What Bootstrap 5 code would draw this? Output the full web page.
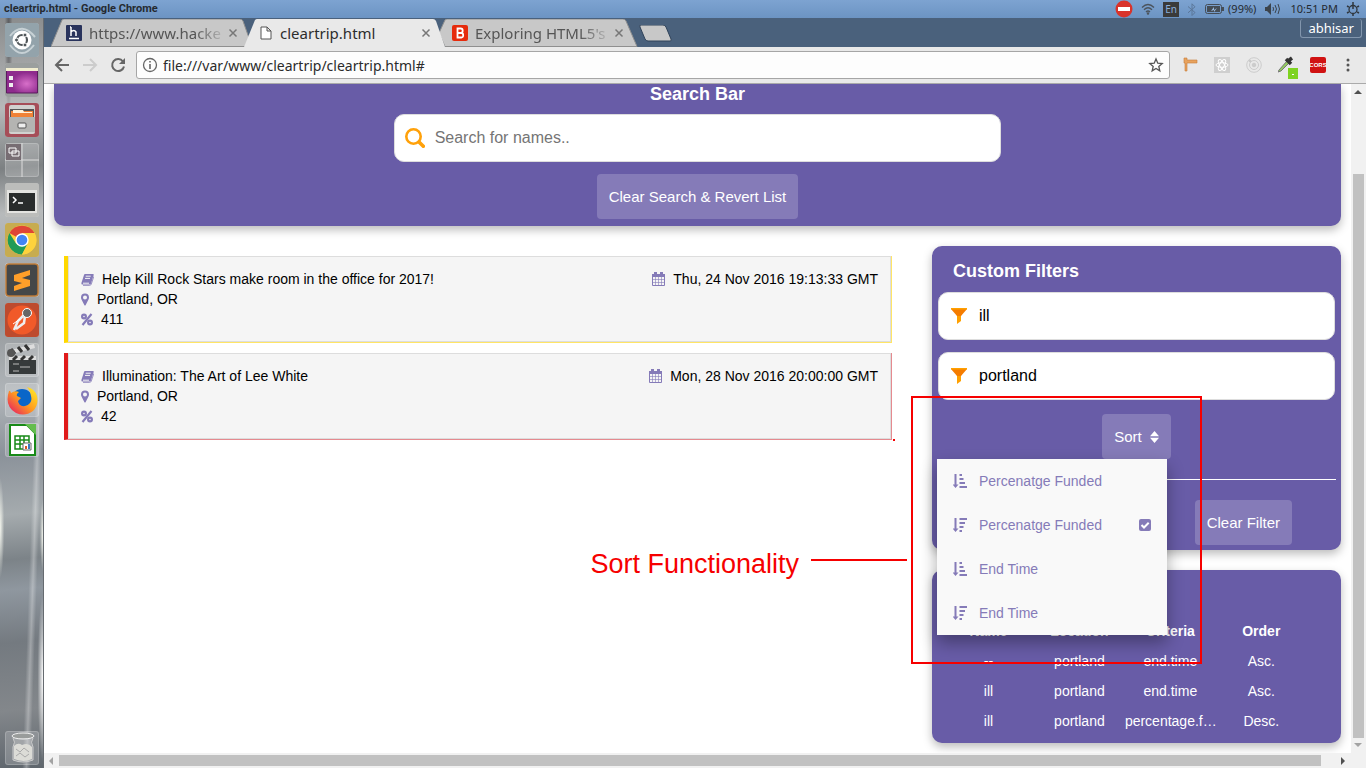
<!DOCTYPE html>
<html lang="en">
<head>
<meta charset="utf-8">
<meta name="viewport" content="width=device-width, initial-scale=1">
<title>cleartrip.html - Google Chrome</title>
<link rel="stylesheet" href="https://cdn.jsdelivr.net/npm/bootstrap@5.3.0/dist/css/bootstrap.min.css">
<style>
:root{--violet:#685ca7;--violet-soft:#857bb8}
body{font-family:"Liberation Sans",Arial,sans-serif;font-size:14px;line-height:20px;color:#000;background:#fff}
button{font-family:inherit}
svg{display:block;flex:none}
.bare{border:0;background:none;padding:0;color:inherit}
/* desktop bar */
.sysbar{height:18px;background:linear-gradient(#7da3d1,#6c94c3);font-family:"Noto Sans",sans-serif;font-size:11px;line-height:18px;color:#252a30;padding:0 6px 0 4px}
.sysbar .win{font-weight:700;font-size:11px;font-family:Roboto,sans-serif}
.lang{width:16px;height:15px;background:#3a3a3a;color:#8bb0dc;font-size:10px;line-height:15px;text-align:center}
/* launcher */
.dock{width:44px;flex:none;padding:5px 5px 3px;gap:6px;border-right:1px solid #666b70;
background:linear-gradient(92deg,#fff0 70%,#ffffff50 76%,#fff0 82%),radial-gradient(ellipse at 0 68%,#f4f6ee 0,#fff0 7%),radial-gradient(ellipse at 100% 69%,#f4f6ee 0,#fff0 5%),radial-gradient(ellipse at 100% 88%,#fff 0,#fff0 9%),radial-gradient(ellipse at 20% 2%,#30303590,#fff0 8%),linear-gradient(175deg,#8a8c8d 0,#b7b9ba 12%,#7c8082 20%,#b7babb 26%,#969a9d 40%,#b0b5b9 50%,#8b929a 58%,#a5abae 66%,#7c8388 72%,#8f979f 76%,#747a80 83%,#83878b 92%,#5f666d 100%)}
.tile{width:34px;height:34px;border-radius:3px;background:#ffffff30;box-shadow:inset 0 0 0 1px #ffffff30}
/* browser chrome */
.tabs{height:29px;background:#4a617c;padding:1px 4px 0 7px;font-family:"Noto Sans",sans-serif;font-size:15px}
.tab{position:relative;isolation:isolate;width:201px;height:28px;padding:0 14px 0 15px;color:#555;line-height:28px}
.tab+.tab{margin-left:-8px}
.tab.on{z-index:1;color:#2d2d2d}
.tab .shape{position:absolute;inset:0;width:100%;height:100%;z-index:-1}
.tab .cap{white-space:nowrap;margin-left:7px}
.tab:not(.on) .cap{-webkit-mask-image:linear-gradient(90deg,#000 80%,#0003);mask-image:linear-gradient(90deg,#000 80%,#0003)}
.user{border:1px solid #8296ad;border-top:0;border-radius:3px;color:#fff;font-size:13px;line-height:17px;padding:0 7px;height:19px}
.tools{height:37px;background:#e9e9e9;border-bottom:1px solid #aaa;padding:0 12px 0 10px;color:#666}
.omni{height:28px;background:#fdfdfd;border:1px solid #a6a6a6;border-radius:3px;padding:0 5px;margin-left:10px}
.omni input{border:0;background:none;outline:0;font:14px "Noto Sans",sans-serif;color:#2b2b2b;padding:0;margin-left:5px}
.picker{margin-right:-4px}
/* page */
.sheet{overflow:hidden;min-width:0;padding:0 10px;background:#fff}
.panel{background:var(--violet);border-radius:10px;color:#fff;box-shadow:0 4px 10px #0004}
.panel h2{font-size:18px;line-height:20px;font-weight:700;margin:0}
.hunt{border-top-left-radius:0;border-top-right-radius:0;padding-bottom:7px}
.hunt h2{margin-bottom:10px}
.field{height:48px;border:1px solid #ddd;border-radius:10px;background:#fff;padding:0 10px;gap:10px}
.field input{border:0;outline:0;font-size:16px;color:#000;background:none;padding:0;min-width:0}
.field input::placeholder{color:#757575;opacity:1}
.hunt .field{width:calc(48% - 10px);min-width:300px}
.act{height:45px;border:0;border-radius:4px;background:var(--violet-soft);color:#fff;font-size:15px;line-height:20px;padding:0 12px}
.act:hover{background:#7a70ad}
.deals{padding:30px 20px 0 10px}
.deal{border:1px solid var(--edge);border-left:4px solid var(--bar);border-top:0;box-shadow:inset 0 0 0 1px #ddd;background:#f5f5f5;padding:13px 13px 13px;color:#000}
.deal+.deal{margin-top:10px}
.deal.gold{--bar:#ffd800;--edge:#ffe566}
.deal.red{--bar:#e01b1b;--edge:#e58a8f}
.deal svg{fill:var(--violet-soft);color:var(--violet-soft)}
.side{padding:20px 0 0 20px}
.side .panel+.panel{margin-top:20px}
.filters{padding:15px 6px 5px}
.filters h2{padding:0 15px;margin-bottom:11px}
.filters .field{margin-bottom:12px;padding:0 12px;gap:12px}
.sortline{padding-top:2px}
.rule{height:1px;background:#fff;margin:20px -1px}
.clearline{padding-right:43px}
.sorts{position:absolute;left:5px;top:213px;width:230px;background:#f9f9f9;box-shadow:0 8px 16px #0005;z-index:2;color:var(--violet-soft)}
.sorts a{height:44px;padding:0 16px;color:var(--violet-soft);text-decoration:none}
.sorts a:hover{background:#eee}
.recent{padding:46px 11px 7px}
.recent table{width:94%;table-layout:fixed;text-align:center}
.recent th,.recent td{height:30px;padding:0;white-space:nowrap}
/* red review marks */
.frame{position:absolute;left:-21px;top:150px;width:291px;height:268px;border:2px solid #f60000;z-index:3;pointer-events:none}
.tag{position:absolute;right:100%;top:148px;padding-right:6px;gap:12px;color:#f60000;font-size:27px;line-height:36px;white-space:nowrap}
.tag i{width:96px;height:2px;background:#f60000;margin-bottom:8px}
.speck{position:absolute;left:100%;bottom:-2px;width:2px;height:2px;background:#f60000;margin-left:2px}
/* scrollbars */
.vbar{width:15px;flex:none;background:#f1f1f1;padding:0 2px}
.vbar span{flex:75 0 0}
.vbar i{width:11px;background:#c1c1c1;flex:564 0 0}
.hbar{height:15px;flex:none;background:#f1f1f1}
.hbar i{height:11px;background:#c1c1c1;flex:1}
</style>
</head>
<body class="vh-100 d-flex flex-column overflow-hidden">
<svg width="0" height="0" class="position-absolute" aria-hidden="true"><defs>
<symbol id="book" viewBox="0 0 13 13"><path d="M4 1h8q1 0 .7 1L10 10.500q-.3 1-1.300 1H1.500Q0 11.500.4 10L3 2q.3-1 1-1z"/><path d="M4.700 3.200h5M4 5.400h5M2 10.200h6" stroke="#f5f5f5" fill="none"/><path d="M12.800 3.500 10.300 11q-.4 1.400-1.700 1.400H2" fill="none" stroke="currentColor" stroke-width=".8"/></symbol>
<symbol id="pin" viewBox="0 0 8 13"><path fill-rule="evenodd" d="M4 .5a4 4 0 0 1 4 4q0 1-.5 2L4.700 12q-.7 1-1.400 0L.5 6.500Q0 5.500 0 4.500a4 4 0 0 1 4-4zm0 2a2 2 0 1 0 0 4 2 2 0 0 0 0-4z"/></symbol>
<symbol id="pct" viewBox="0 0 12 13"><g fill="none" stroke="currentColor" stroke-width="2.200"><circle cx="3" cy="3.500" r="1.900"/><circle cx="9" cy="9.500" r="1.900"/><path d="M10.500 1 1.500 12"/></g></symbol>
<symbol id="cal" viewBox="0 0 13 14"><path fill="none" stroke="currentColor" d="M.5 2.500h12v11H.5z"/><path d="M0 2h13v3H0zM2 0h3v3H2zM8 0h3v3H8z"/><path d="M3.500 5v9M6.500 5v9M9.500 5v9M0 7.500h13M0 10.500h13" stroke="currentColor" stroke-width=".6"/></symbol>
<symbol id="asc" viewBox="0 0 14 14"><path d="M1.500 0h2v10.500H5.500L2.500 14-.5 10.500h2zM6.500 0h2.500v2H6.500zM6.500 4h4v2h-4zM6.500 8h5.500v2H6.500zM6.500 12H14v2H6.500z"/></symbol>
<symbol id="desc" viewBox="0 0 14 14"><path d="M1.500 0h2v10.500H5.500L2.500 14-.5 10.500h2zM6.500 0H14v2H6.500zM6.500 4H12v2H6.500zM6.500 8h4v2h-4zM6.500 12H9v2H6.500z"/></symbol>
<symbol id="funnel" viewBox="0 0 16 16"><path fill="#ffa000" d="M6 7h4v6l-4 3z"/><path fill="#f57c00" d="M0 1h16l-6 7H6z"/><path fill="#ffa000" d="M0 0h16v1.500H0z"/></symbol>
<symbol id="cross" viewBox="0 0 10 10"><path d="m1.500 1.500 7 7M8.500 1.500l-7 7" stroke="#777" stroke-width="1.500" fill="none"/></symbol>
</defs></svg>

<header class="sysbar d-flex align-items-center flex-shrink-0">
  <span class="win me-auto">cleartrip.html - Google Chrome</span>
  <svg width="18" height="18" viewBox="0 0 18 18"><circle cx="9" cy="9" r="8.500" fill="#d9332b"/><path fill="#fff" d="M3 7h12v4H3z"/></svg>
  <svg class="ms-2" width="14" height="12" viewBox="0 0 14 12" fill="none" stroke="#4b535c" stroke-width="1.300"><path d="M1 4.500q6-6 12 0M3 6.800q4-4 8 0M5 9q2-2 4 0"/><circle cx="7" cy="10.500" r=".6"/></svg>
  <span class="lang ms-2 me-2">En</span>
  <svg width="10" height="13" viewBox="0 0 10 13" fill="none" stroke="#5b7698"><path d="m1 3.500 7 6-3 3V.8l3 3-7 6"/></svg>
  <svg class="ms-2" width="19" height="10" viewBox="0 0 19 10"><rect x=".5" y=".5" width="16" height="9" rx="2" fill="none" stroke="#454d56"/><path d="M2 2h13v6H2zM17 3h2v4h-2z" fill="#454d56"/><path d="m6 7 3-4v3l3-2-3 4V6z" fill="#9bbbe0"/></svg>
  <span class="ms-1">(99%)</span>
  <svg class="ms-2 me-2" width="18" height="12" viewBox="0 0 18 12"><path fill="#3c444c" d="M1 4h2l4-4v12L3 8H1z"/><path fill="none" stroke="#3c444c" d="M9 4q1 2 0 4M11 2q3 4 0 8M14 1q3 5 0 10"/></svg>
  <span>10:51 PM</span>
  <svg class="ms-2" width="14" height="14" viewBox="0 0 14 14" fill="none" stroke="#30373e"><circle cx="7" cy="7.500" r="4" stroke-width="1.300"/><path d="M7 0v7M1 4l1.800 1M13 4l-1.800 1M1 11l1.800-1M13 11l-1.800-1M7 11.500V14" stroke-width="1.500"/></svg>
</header>

<div class="d-flex flex-grow-1" style="min-height:0">
  <nav class="dock d-flex flex-column" aria-label="Launcher">
    <svg class="tile" viewBox="0 0 34 34"><path fill="#93a3ab" d="M0 0h34v34H0z"/><path d="M5 13Q17-2 30 14M29 22Q17 38 5 22" stroke="#c7d1d5" stroke-width="2" fill="none"/><circle cx="17" cy="17" r="9.500" fill="#fff"/><circle cx="17" cy="17" r="5" fill="none" stroke="#505659" stroke-width="2.200"/><g fill="#505659" stroke="#fff"><circle cx="11.500" cy="17" r="2"/><circle cx="20" cy="12" r="2"/><circle cx="20" cy="22" r="2"/></g></svg>
    <svg class="tile" viewBox="0 0 34 34"><path fill="#9b9f9e" d="M0 0h34v34H0z"/><defs><radialGradient id="pu" cx=".65" cy=".6"><stop stop-color="#d86fc9"/><stop offset="1" stop-color="#8e2b8d"/></radialGradient></defs><path fill="url(#pu)" stroke="#5b1d5d" d="M1.500 7h31v23h-31z"/><path fill="#f1edcf" d="M1 5h32v3H1z"/><path fill="#eee" d="M4 13h4v4H4zM4 20h4v4H4z"/></svg>
    <svg class="tile" viewBox="0 0 34 34"><path fill="#a64d58" d="M0 0h34v34H0z"/><rect x="4" y="2" width="26" height="29" rx="2" fill="#d1d1cf"/><path fill="#555" d="M5 6h24v9H5z"/><path fill="#f08236" d="M6 8h22v6H6z"/><path fill="#fff3db" d="M8 7h10l1 2h8v1H8z"/><path fill="#b4b4b2" d="M4 14h26v15H4z"/><rect x="13" y="20" width="8" height="5" rx="1" fill="#eee" stroke="#555"/></svg>
    <svg class="tile" viewBox="0 0 34 34"><path stroke="#ddd" d="M17 0v34M0 17h34"/><path fill="#776d73" d="M1 1h15v16H1z"/><path fill="#776d73" stroke="#fff" d="M4 5h7v5H4zM7 8h7v5H7z"/></svg>
    <svg class="tile" viewBox="0 0 34 34"><path fill="#bcbdbb" d="M0 0h34v34H0z"/><path fill="#e3e3e0" d="M2 7h30v23H2z"/><path fill="#292c2c" d="M4 10h26v18H4z"/><path d="m8 14 3 3-3 3M13 20h5" stroke="#fff" stroke-width="1.500" fill="none"/></svg>
    <svg class="tile" viewBox="0 0 34 34"><path fill="#c7ac50" d="M0 0h34v34H0z"/><circle cx="17" cy="17" r="14.500" fill="#fdd23d"/><path fill="#df4536" d="M17 17 4.400 10A14.500 14.500 0 0 1 29.600 10H17z"/><path fill="#209b58" d="M4.400 10A14.500 14.500 0 0 0 17 31.500L23 21 11 20.500z"/><path fill="#fdd23d" d="M22.500 20.500 17 31.500A14.500 14.500 0 0 0 29.600 10H17z"/><circle cx="17" cy="17" r="6.700" fill="#fff"/><circle cx="17" cy="17" r="5.300" fill="#4285f4"/></svg>
    <svg class="tile" viewBox="0 0 34 34"><rect x="1" y="1" width="32" height="32" rx="3" fill="#444748" stroke="#bb7936" stroke-width="1.500"/><path fill="#ff9f29" d="m9 12 16-5v5l-8 3 8 2v6L9 28v-5l8-3-8-2z"/></svg>
    <svg class="tile" viewBox="0 0 34 34"><path fill="#bd4b2e" d="M0 0h34v34H0z"/><circle cx="17" cy="17" r="14.500" fill="#f15a29"/><path d="m20 11-7 7-4 9M20 13l-1 7-8 6" stroke="#eee" stroke-width="2.500" fill="none"/><circle cx="22" cy="10" r="4.500" fill="#666" stroke="#fff"/><path d="m8 21 7-5" stroke="#fff"/></svg>
    <svg class="tile" viewBox="0 0 34 34"><path fill="#363a3b" d="M4 14h27v17H4z"/><path fill="#ddd" d="m2 8 27-7 1 4L3 12zM4 13h27v4H4z"/><path stroke="#333" stroke-width="3" d="m6 6 4 5M13 4l4 5M20 2l4 5M8 17l4-4M16 17l4-4M24 17l4-4"/><path stroke="#bbb" d="M8 21h6M15 24h10M8 28h6"/><circle cx="6" cy="10" r="4" fill="#555"/></svg>
    <svg class="tile" viewBox="0 0 34 34"><defs><linearGradient id="fx" x1="1" x2="0" y2="1"><stop offset=".1" stop-color="#ffe226"/><stop offset=".5" stop-color="#ff9a1f"/><stop offset=".9" stop-color="#e8265f"/></linearGradient></defs><circle cx="17" cy="17" r="11" fill="#0a66c8"/><path fill="url(#fx)" d="M4 8q1-1 2 2 4-3 8-1-3 2-2 4l4 2-3 3q1 6 7 5 8-2 6-10-1-6-4-9 8 2 10 9 2 9-4 15-8 6-17 2Q-1 23 4 8z"/></svg>
    <svg class="tile" viewBox="0 0 34 34"><path fill="#fff" stroke="#188a18" stroke-width="2" d="M5 2h17l8 8v22H5z"/><path fill="#64bd4e" d="M20 1h11v11z"/><path fill="none" stroke="#188a18" stroke-width="1.500" d="M10 13h14v13H10zM10 17h14M10 21h14M15 13v13M19 13v13"/><path fill="#fff" stroke="#666" d="M18 20h8v7h-8z"/><path stroke="#dd5522" stroke-width="2" d="M21 26v-3"/><path stroke="#3a78c0" stroke-width="2" d="M24 26v-5"/></svg>
    <svg class="tile mt-auto" viewBox="0 0 34 34"><ellipse cx="18" cy="5" rx="11" ry="3" fill="#999c9b" stroke="#eee"/><path d="M8 7q3 4 0 9v13q10 4 20 0V16q-3-5 0-9" fill="#fff3" stroke="#ccc"/><path d="M9 15q4-4 8-1 6-3 10 2v12q-8 4-18 0z" fill="#dcdcd7"/><path d="m11 18 4 3 4-4 5 4M11 25l4-3 5 4 4-3" stroke="#aaa" fill="none"/></svg>
  </nav>

  <div class="d-flex flex-column flex-grow-1" style="min-width:0">
    <div class="tabs d-flex flex-shrink-0">
      <div class="tab d-flex align-items-center"><svg class="shape" viewBox="0 0 201 28" preserveAspectRatio="none"><path d="M0 27.500 11 1q1-1 2-1h176q2 0 3 2l9 25.500z" fill="#c8c8c8" stroke="#8f8f8f"/></svg>
        <svg width="16" height="16" viewBox="0 0 16 16"><rect width="16" height="16" rx="1" fill="#29335c"/><path d="M5 2v9M5 7q3-3 5 0v4M3 13.500h10M4 2h1" stroke="#fff" stroke-width="1.500" fill="none"/></svg>
        <span class="cap">https://www.hacke</span><button class="bare ms-auto" aria-label="Close tab"><svg width="10" height="10"><use href="#cross"/></svg></button></div>
      <div class="tab on d-flex align-items-center"><svg class="shape" viewBox="0 0 201 28" preserveAspectRatio="none"><path d="M0 28 11 1q1-1 2-1h176q2 0 3 2l9 26z" fill="#e9e9e9"/></svg>
        <svg width="14" height="16" viewBox="0 0 14 16"><path d="M2 2h6l4 4v8H2zM8 2v4h4" fill="#fff" stroke="#555"/></svg>
        <span class="cap">cleartrip.html</span><button class="bare ms-auto" aria-label="Close tab"><svg width="10" height="10"><use href="#cross"/></svg></button></div>
      <div class="tab d-flex align-items-center"><svg class="shape" viewBox="0 0 201 28" preserveAspectRatio="none"><path d="M8 27.500 2 14 8 1q1-1 2-1h176q2 0 3 2l11 25.500z" fill="#c8c8c8" stroke="#8f8f8f"/></svg>
        <svg width="16" height="16" viewBox="0 0 16 16"><rect width="16" height="16" rx="2" fill="#e62b0c"/><path d="M5.500 3.500h3.200q2 0 2 2.200t-2 2.300H5.500zM5.500 8h3.700q2 0 2 2.300t-2 2.200H5.500z" fill="none" stroke="#fff" stroke-width="1.800"/></svg>
        <span class="cap">Exploring HTML5's</span><button class="bare ms-auto" aria-label="Close tab"><svg width="10" height="10"><use href="#cross"/></svg></button></div>
      <button class="bare align-self-center" aria-label="New tab"><svg width="34" height="17" viewBox="0 0 34 17"><path d="M2 2q-1-2 1-2h22q2 0 3 2l5 12q1 2-1 2H10q-2 0-3-2z" fill="#c8c8c8" stroke="#2f4259"/></svg></button>
      <button class="bare user ms-auto">abhisar</button>
    </div>
    <div class="tools d-flex align-items-center flex-shrink-0">
      <button class="bare" aria-label="Back"><svg width="16" height="14" viewBox="0 0 16 14" fill="none" stroke="#666" stroke-width="2"><path d="M8 1 2 7l6 6M2 7h13"/></svg></button>
      <button class="bare mx-2 px-1" aria-label="Forward"><svg width="16" height="14" viewBox="0 0 16 14" fill="none" stroke="#ccc" stroke-width="2"><path d="m8 1 6 6-6 6M14 7H1"/></svg></button>
      <button class="bare" aria-label="Reload"><svg width="16" height="16" viewBox="0 0 16 16"><path d="M13 4.500A6 6 0 1 0 14 9.500" fill="none" stroke="#666" stroke-width="2"/><path d="M15 1v6H9z" fill="#666"/></svg></button>
      <div class="omni d-flex align-items-center flex-grow-1">
        <svg width="16" height="16" viewBox="0 0 16 16"><circle cx="8" cy="8" r="6.500" fill="none" stroke="#666" stroke-width="1.300"/><path d="M7.200 4h1.600v1.600H7.200zM7.200 7h1.600v5H7.200z" fill="#666"/></svg>
        <input class="flex-grow-1" type="text" aria-label="Address" value="file:///var/www/cleartrip/cleartrip.html#">
        <button class="bare" aria-label="Bookmark"><svg width="16" height="16" viewBox="0 0 16 16"><path d="m8 2 1.800 4.200 4.400.4-3.400 2.900 1 4.400L8 11.500l-3.800 2.400 1-4.400-3.400-2.900 4.400-.4z" fill="none" stroke="#555" stroke-width="1.300"/></svg></button>
      </div>
      <div class="d-flex gap-3 ms-2 ps-1 align-items-center">
        <svg width="16" height="16" viewBox="0 0 16 16"><path fill="#e8a35e" stroke="#c77e3a" stroke-width=".6" d="M2 1h3v2h10v3H5v8H3V6H2z"/></svg>
        <svg width="16" height="16" viewBox="0 0 16 16"><path fill="#cfcfcf" d="M0 0h16v16H0z"/><g fill="none" stroke="#fff"><ellipse cx="8" cy="8" rx="6" ry="2.300"/><ellipse cx="8" cy="8" rx="6" ry="2.300" transform="rotate(60 8 8)"/><ellipse cx="8" cy="8" rx="6" ry="2.300" transform="rotate(120 8 8)"/></g></svg>
        <svg width="16" height="16" viewBox="0 0 16 16" fill="none" stroke="#ccc"><circle cx="8" cy="8" r="7.300"/><circle cx="8" cy="8" r="4.500"/><circle cx="8" cy="8" r="1.800" fill="#ccc"/><circle cx="4" cy="4" r="1" fill="#bbb"/></svg>
        <svg class="picker" width="20" height="28" viewBox="0 0 20 28"><path d="m1 19 8-9 2 2-8 8-3 1z" fill="#92cb5e" stroke="#777"/><path d="m8 8 5 5M10 10l4-3" stroke="#333" stroke-width="3.500"/><path fill="#7ed321" d="M10 17h10v11H10z"/><path fill="#fff" d="M14 23h2v1h-2z"/></svg>
        <svg width="16" height="16" viewBox="0 0 16 16"><rect width="16" height="16" rx="2" fill="#d01212"/><text x="8" y="10" font-size="6" font-weight="700" fill="#fff" text-anchor="middle">CORS</text></svg>
        <button class="bare" aria-label="Menu"><svg width="12" height="14" viewBox="0 0 12 14" fill="#555"><circle cx="6" cy="2" r="1.500"/><circle cx="6" cy="7" r="1.500"/><circle cx="6" cy="12" r="1.500"/></svg></button>
      </div>
    </div>

    <div class="d-flex flex-grow-1" style="min-height:0">
      <main class="sheet flex-grow-1">
        <section class="panel hunt d-flex flex-column align-items-center">
          <h2>Search Bar</h2>
          <label class="field d-flex align-items-center mb-2">
            <svg width="20" height="20" viewBox="0 0 20 20" fill="none" stroke="#ffa10a"><circle cx="8.500" cy="8.500" r="7.200" stroke-width="2.600"/><path d="m14 14 4.300 4.300" stroke-width="3.600" stroke-linecap="round"/></svg>
            <input class="flex-grow-1" type="text" placeholder="Search for names.." aria-label="Search for names">
          </label>
          <button class="act mt-1">Clear Search &amp; Revert List</button>
        </section>

        <div class="row g-0">
          <div class="col-8 deals">
            <article class="deal gold d-flex justify-content-between">
              <div>
                <div class="d-flex align-items-center gap-2"><svg width="13" height="13"><use href="#book"/></svg>Help Kill Rock Stars make room in the office for 2017!</div>
                <div class="d-flex align-items-center gap-2"><svg width="8" height="13"><use href="#pin"/></svg>Portland, OR</div>
                <div class="d-flex align-items-center gap-2"><svg width="12" height="13"><use href="#pct"/></svg>411</div>
              </div>
              <div class="d-flex align-items-center gap-2 align-self-start"><svg width="13" height="14"><use href="#cal"/></svg>Thu, 24 Nov 2016 19:13:33 GMT</div>
            </article>
            <article class="deal red d-flex justify-content-between position-relative">
              <div>
                <div class="d-flex align-items-center gap-2"><svg width="13" height="13"><use href="#book"/></svg>Illumination: The Art of Lee White</div>
                <div class="d-flex align-items-center gap-2"><svg width="8" height="13"><use href="#pin"/></svg>Portland, OR</div>
                <div class="d-flex align-items-center gap-2"><svg width="12" height="13"><use href="#pct"/></svg>42</div>
              </div>
              <div class="d-flex align-items-center gap-2 align-self-start"><svg width="13" height="14"><use href="#cal"/></svg>Mon, 28 Nov 2016 20:00:00 GMT</div>
              <span class="speck"></span>
            </article>
          </div>

          <div class="col-4 side">
            <section class="panel position-relative filters">
              <h2>Custom Filters</h2>
              <label class="field d-flex align-items-center"><svg width="16" height="16"><use href="#funnel"/></svg><input class="flex-grow-1" type="text" value="ill" aria-label="Filter by name"></label>
              <label class="field d-flex align-items-center"><svg width="16" height="16"><use href="#funnel"/></svg><input class="flex-grow-1" type="text" value="portland" aria-label="Filter by location"></label>
              <div class="sortline text-center"><button class="act d-inline-flex align-items-center gap-2">Sort <svg width="9" height="14" viewBox="0 0 9 14" fill="#fff"><path d="M4.500 1 9 6.300H0zM4.500 13 9 7.700H0z"/></svg></button></div>
              <div class="rule"></div>
              <div class="clearline d-flex justify-content-end"><button class="act">Clear Filter</button></div>
              <div class="sorts">
                <a href="#" class="d-flex align-items-center"><svg class="me-2" width="14" height="14" fill="currentColor"><use href="#asc"/></svg><span class="ms-1">Percenatge Funded</span></a>
                <a href="#" class="d-flex align-items-center"><svg class="me-2" width="14" height="14" fill="currentColor"><use href="#desc"/></svg><span class="ms-1 me-auto">Percenatge Funded</span><svg width="12" height="12" viewBox="0 0 12 12"><rect width="12" height="12" rx="2" fill="#857bb8"/><path d="m2.500 6 2.500 2.500L9.700 3.800" stroke="#fff" stroke-width="2" fill="none"/></svg></a>
                <a href="#" class="d-flex align-items-center"><svg class="me-2" width="14" height="14" fill="currentColor"><use href="#asc"/></svg><span class="ms-1">End Time</span></a>
                <a href="#" class="d-flex align-items-center"><svg class="me-2" width="14" height="14" fill="currentColor"><use href="#desc"/></svg><span class="ms-1">End Time</span></a>
              </div>
              <div class="frame"><div class="tag d-flex align-items-center">Sort Functionality<i></i></div></div>
            </section>
            <section class="panel recent">
              <table>
                <thead><tr><th>Name</th><th>Location</th><th>Criteria</th><th>Order</th></tr></thead>
                <tbody>
                  <tr><td>--</td><td>portland</td><td>end.time</td><td>Asc.</td></tr>
                  <tr><td>ill</td><td>portland</td><td>end.time</td><td>Asc.</td></tr>
                  <tr><td>ill</td><td>portland</td><td>percentage.f…</td><td>Desc.</td></tr>
                </tbody>
              </table>
            </section>
          </div>
        </div>
      </main>
      <div class="vbar d-flex flex-column align-items-center">
        <svg width="9" height="15" viewBox="0 0 9 15"><path d="M0 10h8L4 6z" fill="#505050"/></svg>
        <span></span><i></i>
        <svg width="9" height="15" viewBox="0 0 9 15"><path d="M0 5h8L4 9z" fill="#a3a3a3"/></svg>
      </div>
    </div>
    <div class="hbar d-flex align-items-center">
      <svg width="15" height="15" viewBox="0 0 15 15"><path d="M9 4v8L5 8z" fill="#a3a3a3"/></svg><i></i>
      <svg class="ms-2 me-3" width="21" height="15" viewBox="0 0 21 15"><path d="M12 4v8l4-4z" fill="#505050"/></svg>
    </div>
  </div>
</div>
<script src="https://cdn.jsdelivr.net/npm/bootstrap@5.3.0/dist/js/bootstrap.bundle.min.js"></script>
</body>
</html>
